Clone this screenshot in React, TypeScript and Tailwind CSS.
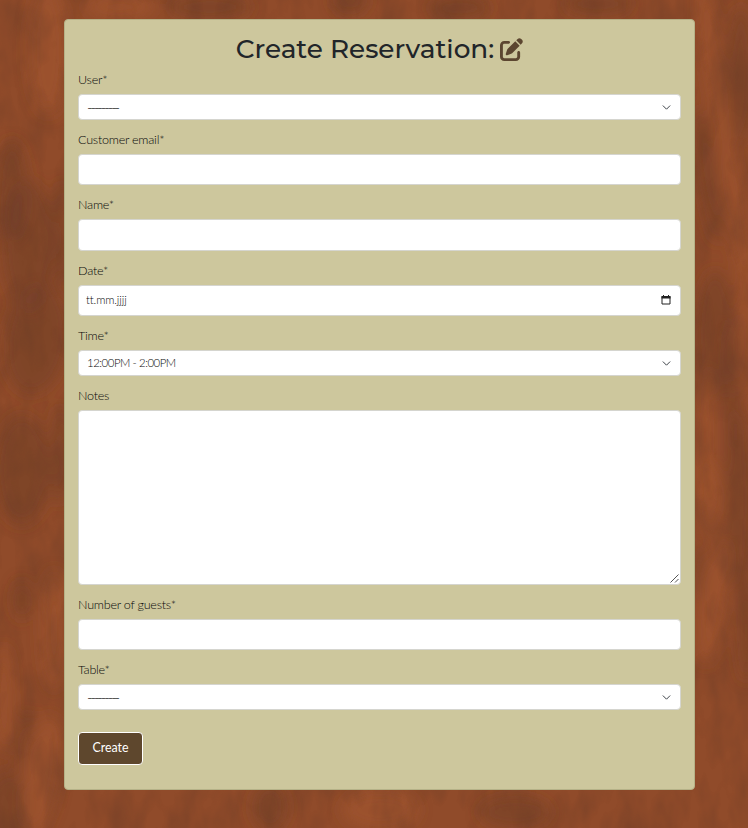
import type { ReactNode } from "react";
import { FaPenToSquare } from "react-icons/fa6";

const darkGrain = [
  [28, 245, 26, 65, 0], [12, 190, 16, 50, 0], [36, 340, 32, 55, 8], [22, 470, 28, 55, 0],
  [22, 600, 9, 20, 0], [24, 742, 9, 30, 8], [8, 815, 22, 45, 0], [62, 230, 7, 50, 0],
  [60, 455, 10, 50, 0], [708, 175, 10, 70, -8], [715, 335, 20, 65, 0], [738, 500, 15, 90, 0],
  [746, 632, 9, 50, 0], [700, 572, 8, 30, 0], [741, 75, 14, 70, 0], [732, 380, 8, 70, 0],
  [270, 807, 18, 24, 0], [210, 7, 42, 12, 0], [460, 8, 30, 12, 0], [598, 4, 34, 12, 0],
  [515, 812, 36, 16, 0], [350, 0, 18, 15, 0],
];
const lightGrain = [
  [713, 60, 9, 80, -8], [733, 195, 9, 85, -8], [745, 315, 6, 85, 0], [714, 600, 14, 65, 8],
  [710, 500, 12, 40, 0], [48, 50, 20, 65, 0], [54, 630, 12, 60, 0], [42, 775, 18, 60, 8],
  [4, 700, 8, 55, 0], [705, 435, 9, 70, 0], [380, 810, 38, 20, 0], [120, 7, 35, 12, 0],
];

function WoodBackground() {
  return (
    <svg className="absolute inset-0 h-full w-full" viewBox="0 0 748 828" aria-hidden="true">
      <defs>
        <filter id="soften" x="-80%" y="-80%" width="260%" height="260%">
          <feGaussianBlur stdDeviation="7" />
        </filter>
        <filter id="grain" x="0" y="0" width="100%" height="100%" colorInterpolationFilters="sRGB">
          <feTurbulence type="fractalNoise" baseFrequency="0.045 0.02" numOctaves="3" seed="8" />
          <feColorMatrix values="0 0 0 0 0.38 0 0 0 0 0.22 0 0 0 0 0.15 1.5 0 0 0 -0.6" />
        </filter>
      </defs>
      <rect width="748" height="828" fill="#904b2a" />
      <g filter="url(#soften)">
        {darkGrain.map(([x, y, rx, ry, r]) => (
          <ellipse key={`${x}-${y}`} cx={x} cy={y} rx={rx} ry={ry} fill="#74402a" opacity=".6" transform={`rotate(${r} ${x} ${y})`} />
        ))}
        {lightGrain.map(([x, y, rx, ry, r]) => (
          <ellipse key={`${x}-${y}`} cx={x} cy={y} rx={rx} ry={ry} fill="#a0562f" opacity=".7" transform={`rotate(${r} ${x} ${y})`} />
        ))}
      </g>
      <rect width="748" height="828" filter="url(#grain)" opacity=".45" />
    </svg>
  );
}

function Field({ label, first, children }: { label: string; first?: boolean; children: ReactNode }) {
  return (
    <label className="block">
      <span className={`block pb-2 text-[12.6px] leading-[13px] tracking-[-0.25px] text-[#080808] ${first ? "pt-[2px]" : "pt-[13px]"}`}>{label}</span>
      {children}
    </label>
  );
}

const box = "flex w-full items-center justify-between rounded-[4px] border border-[#d5d5cf] bg-white text-[#080808]";

function Select({ value, dashes }: { value: string; dashes?: boolean }) {
  return (
    <div className={`${box} h-[26px] pr-[9px] pl-2 text-[11.4px]`}>
      <span className={dashes ? "text-[15px] font-light leading-none tracking-[-2.1px]" : "tracking-[-0.45px]"}>{value}</span>
      <svg className="h-[9px] w-[9px]" viewBox="0 0 16 16" fill="none" stroke="#343a40" strokeWidth="1.7" strokeLinecap="round" strokeLinejoin="round">
        <path d="m2 5 6 6 6-6" />
      </svg>
    </div>
  );
}

export default function App() {
  return (
    <div className="relative h-[828px] w-[748px] overflow-hidden pt-[19px] pl-16 font-['Lato',sans-serif] font-light">
      <WoodBackground />
      <main className="relative h-[771px] w-[631px] rounded-[4px] border border-[#b5b187] bg-[#cdc79d] px-[13px] pt-[9px]">
        <h1 className="flex h-[42px] items-center justify-center gap-[6px] font-['Montserrat','Inter',sans-serif] text-[26.3px] font-medium text-[#212529]">
          <span className="whitespace-nowrap">Create Reservation:</span>
          <FaPenToSquare className="mb-[2px] h-[23px] w-[23px] text-[#5c4630]" />
        </h1>
        <Field label="User*" first><Select value="---------" dashes /></Field>
        <Field label="Customer email*"><div className={`${box} h-[31px]`} /></Field>
        <Field label="Name*"><div className={`${box} h-8`} /></Field>
        <Field label="Date*">
          <div className={`${box} h-[31px] pr-[9px] pb-[2px] pl-[7px] text-[11.4px]`}>
            <span className="tracking-[-0.1px]">tt.mm.jjjj</span>
            <svg className="h-[10px] w-[10px]" viewBox="0 0 10 10">
              <path d="M1 1.5h8v7.5H1z" fill="none" stroke="#222" />
              <path d="M.5 1h9v2.5h-9zM2 0h1v2H2zM7 0h1v2H7z" fill="#222" />
            </svg>
          </div>
        </Field>
        <Field label="Time*"><Select value="12:00PM - 2:00PM" /></Field>
        <Field label="Notes">
          <div className={`${box} h-[175px] items-end justify-end p-px`}>
            <svg className="h-[9px] w-[9px]" viewBox="0 0 9 9" stroke="#555" strokeWidth="1">
              <path d="M.5 8.5l8-8M5 8.5 8.5 5" />
            </svg>
          </div>
        </Field>
        <Field label="Number of guests*"><div className={`${box} h-[31px]`} /></Field>
        <Field label="Table*"><Select value="---------" dashes /></Field>
        <button className="mt-[22px] flex h-[33px] w-[65px] items-center justify-center rounded-[4px] border border-white bg-[#5e472d] text-[12.4px] font-normal text-white">Create</button>
      </main>
    </div>
  );
}
